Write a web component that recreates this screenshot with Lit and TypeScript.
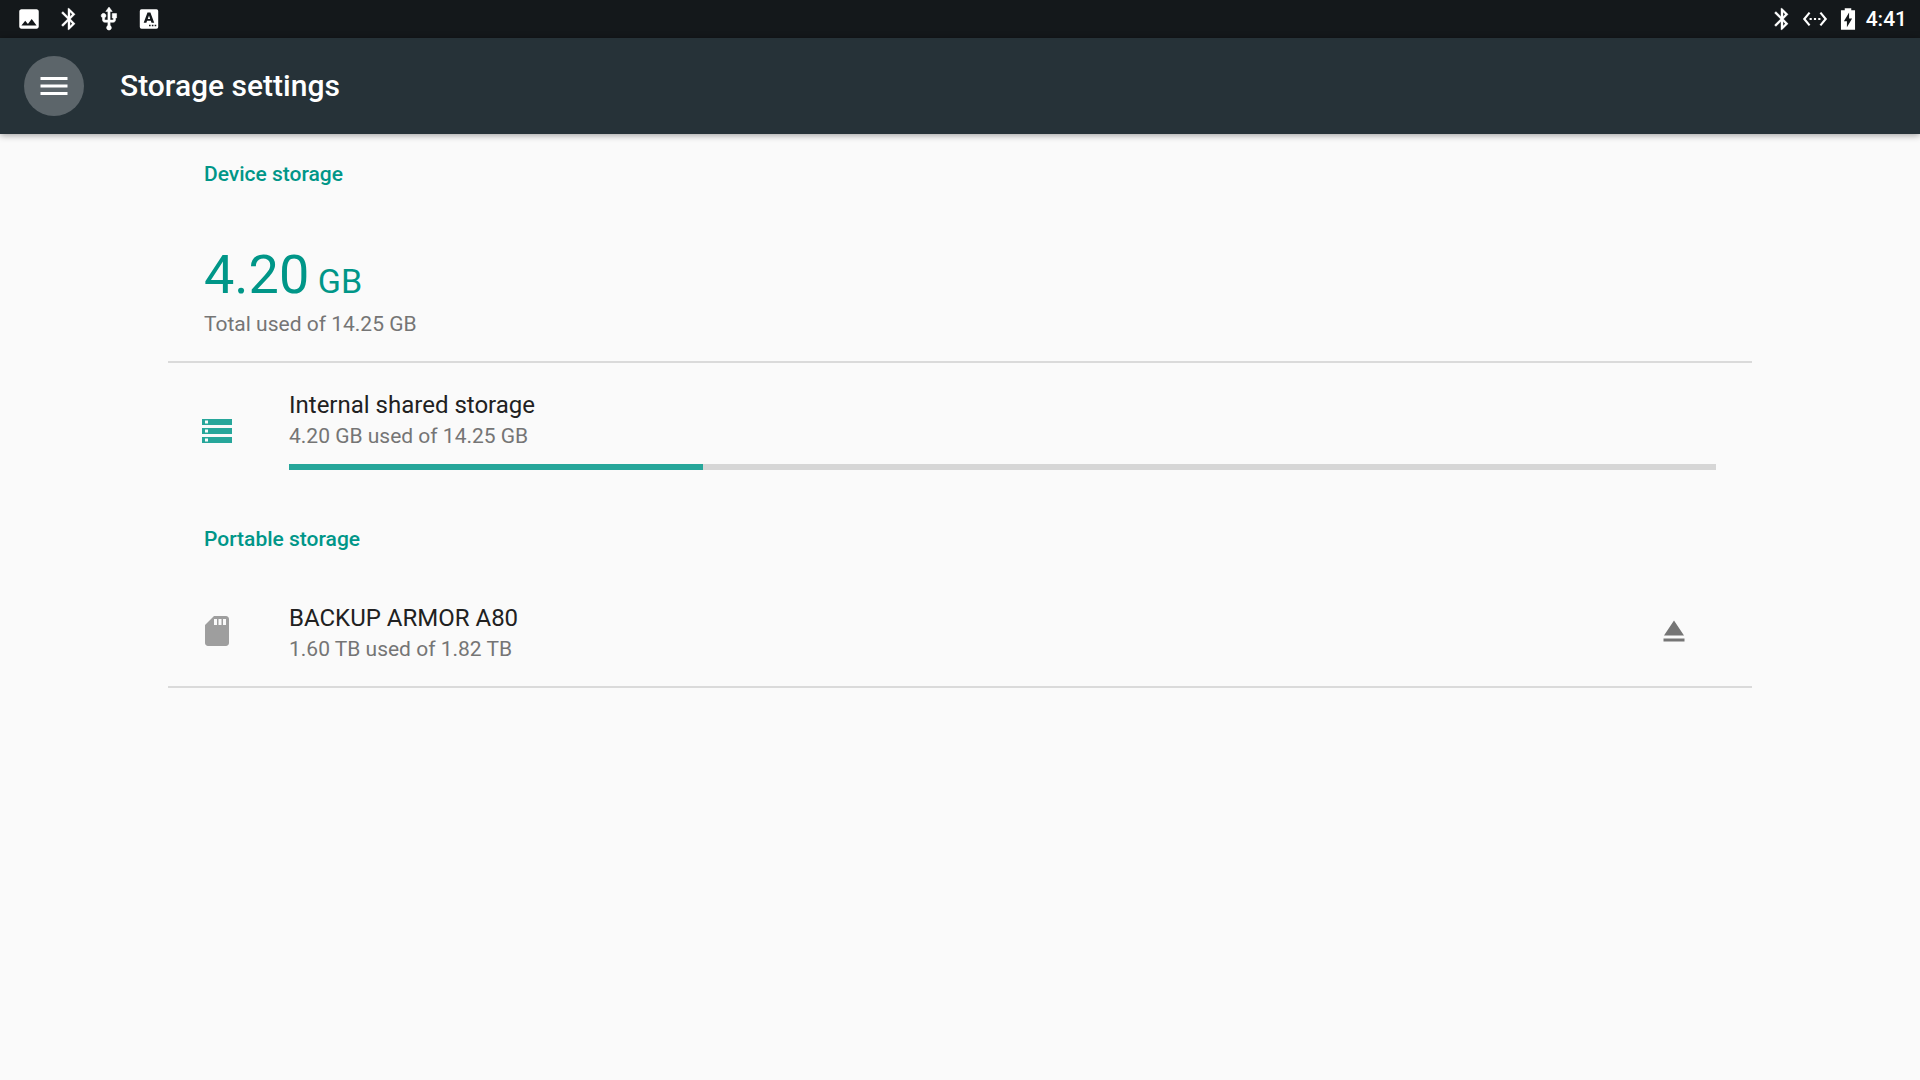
import { LitElement, html, css, svg } from "lit";
import { customElement, property } from "lit/decorators.js";

const icon = (cls: string, content: unknown) =>
  html`<svg class=${cls} viewBox="0 0 24 24" aria-hidden="true">${content}</svg>`;

const glyphs = {
  image: svg`<path fill-rule="evenodd" d="M21 19V5c0-1.100-.9-2-2-2H5c-1.100 0-2 .9-2 2v14c0 1.100.9 2 2 2h14c1.100 0 2-.9 2-2zM8.500 13.500l2.500 3.010L14.500 12l4.500 6H5l3.500-4.500z"/>`,
  bluetooth: svg`<path stroke="currentColor" stroke-width=".2" fill-rule="evenodd" d="M17.710 7.710L12 2h-1v7.590L6.410 5 5 6.410 10.590 12 5 17.590 6.410 19 11 14.410V22h1l5.710-5.710-4.300-4.290 4.300-4.290zM13 5.830l1.880 1.880L13 9.590V5.830zm1.880 10.460L13 18.170v-3.760l1.880 1.880z"/>`,
  usb: svg`<path stroke="currentColor" stroke-width=".5" d="M15 7v4h1v2h-3V5h2l-3-4-3 4h2v8H8v-2.070c.7-.37 1.200-1.080 1.200-1.930 0-1.210-.99-2.200-2.200-2.200-1.210 0-2.200.99-2.200 2.200 0 .85.5 1.560 1.200 1.930V13c0 1.110.89 2 2 2h3v3.050c-.71.37-1.200 1.100-1.200 1.950 0 1.220.99 2.200 2.200 2.200 1.210 0 2.200-.98 2.200-2.200 0-.85-.49-1.580-1.200-1.950V15h3c1.110 0 2-.89 2-2v-2h1V7h-4z"/>`,
  keyboard: svg`<rect x="3.500" y="3" width="17" height="18" rx="1.600"/>
    <path class="ink" fill-rule="evenodd" d="M10.600 6h2.700l3.500 9.500h-2.500l-.6-1.800h-3.500l-.6 1.800H7.100zM12 8.700l-1.150 3.300h2.250z"/>
    <path class="ink" d="M12 17.200h1.500v1.500H12zM14.600 17.200h1.500v1.500h-1.500zM17.200 17.200h1.500v1.500h-1.500z"/>`,
  ethernet: svg`<path d="M7.770 6.760L6.230 5.480.82 12l5.410 6.520 1.540-1.280L3.420 12l4.350-5.240zM7 13h2v-2H7v2zm10-2h-2v2h2v-2zm-6 2h2v-2h-2v2zm6.770-7.520l-1.540 1.280L20.580 12l-4.350 5.240 1.540 1.280L23.180 12l-5.410-6.520z"/>`,
  battery: svg`<path fill-rule="evenodd" d="M18.500 4H15V2H9v2H5.500v18h13zM11 19.500V14H8.200l4.800-8v5.500h2.800z"/>`,
  menu: svg`<path d="M3 18h18v-2H3v2zm0-5h18v-2H3v2zm0-7v2h18V6H3z"/>`,
  storage: svg`<path fill-rule="evenodd" d="M2 20h20v-4H2v4zm2-3h2v2H4v-2zM2 4v4h20V4H2zm4 3H4V5h2v2zm-4 7h20v-4H2v4zm2-3h2v2H4v-2z"/>`,
  sdCard: svg`<path fill-rule="evenodd" d="M18 2h-8L4.020 8 4 20c0 1.100.9 2 2 2h12c1.100 0 2-.9 2-2V4c0-1.100-.9-2-2-2zm-6 6h-2V4h2v4zm3 0h-2V4h2v4zm3 0h-2V4h2v4z"/>`,
  eject: svg`<path d="M5 17h14v2H5zm7-12L5.330 15h13.340z"/>`,
};

@customElement("status-bar")
class StatusBar extends LitElement {
  static styles = css`
    :host {
      display: flex;
      align-items: center;
      justify-content: space-between;
      height: 38px;
      padding: 0 13px 0 16px;
      background: #14181b;
      color: #fff;
    }
    .group { display: flex; align-items: center; gap: 14px; }
    .system { gap: 7px; }
    .icon { display: block; width: 26px; height: 26px; fill: currentColor; }
    .ink { fill: #14181b; }
    .clock { margin-left: -2px; font-size: 21px; line-height: 28px; font-weight: 500; }
  `;
  render() {
    return html`
      <div class="group">
        ${icon("icon", glyphs.image)} ${icon("icon", glyphs.bluetooth)}
        ${icon("icon", glyphs.usb)} ${icon("icon", glyphs.keyboard)}
      </div>
      <div class="group system">
        ${icon("icon", glyphs.bluetooth)} ${icon("icon", glyphs.ethernet)}
        ${icon("icon", glyphs.battery)}
        <time class="clock">4:41</time>
      </div>
    `;
  }
}

@customElement("storage-volume")
class StorageVolume extends LitElement {
  @property() name = "";
  @property() summary = "";
  @property() kind: "internal" | "portable" = "internal";
  @property({ type: Number }) percent = 0;

  static styles = css`
    :host { display: block; }
    .row { display: flex; align-items: center; padding: 0 36px 0 31px; }
    .icon { display: block; flex: none; width: 36px; height: 36px; fill: currentColor; }
    .internal { color: #26a69a; }
    .portable { color: #9e9e9e; }
    .text { flex: 1; min-width: 0; margin-left: 54px; padding: 27px 0 22px; }
    .metered { padding: 26px 0 29px; }
    .name { margin: 0; font-size: 24px; line-height: 32px; font-weight: 400; color: #212121; }
    .summary { margin: 0; font-size: 21px; line-height: 30px; color: #757575; }
    .track { height: 6px; margin-top: 13px; background: #d6d6d6; }
    .fill { height: 100%; background: #26a69a; }
    .eject {
      display: flex;
      align-items: center;
      justify-content: center;
      width: 84px;
      height: 60px;
      padding: 0;
      border: 0;
      background: none;
      color: #757575;
      cursor: pointer;
    }
  `;
  render() {
    const internal = this.kind === "internal";
    return html`
      <div class="row">
        ${icon(`icon ${this.kind}`, internal ? glyphs.storage : glyphs.sdCard)}
        <div class=${internal ? "text metered" : "text"}>
          <h3 class="name">${this.name}</h3>
          <p class="summary">${this.summary}</p>
          ${internal
            ? html`<div class="track" role="progressbar" aria-label=${this.name} aria-valuenow=${this.percent}>
                <div class="fill" style="width:${this.percent}%"></div>
              </div>`
            : null}
        </div>
        ${internal
          ? null
          : html`<button class="eject" type="button" aria-label="Eject">${icon("icon", glyphs.eject)}</button>`}
      </div>
    `;
  }
}

@customElement("app-root")
class AppRoot extends LitElement {
  static styles = css`
    :host {
      display: flex;
      flex-direction: column;
      min-height: 100vh;
      background: #fafafa;
      font-family: Roboto, "Noto Sans", sans-serif;
    }
    .toolbar {
      display: flex;
      align-items: center;
      gap: 36px;
      height: 96px;
      padding: 0 24px;
      background: #263238;
      color: #fff;
      box-shadow: 0 1px 7px rgba(0, 0, 0, 0.4);
    }
    .menu {
      display: flex;
      align-items: center;
      justify-content: center;
      width: 60px;
      height: 60px;
      padding: 0;
      border: 0;
      border-radius: 50%;
      background: #5c656a;
      color: #fff;
      cursor: pointer;
    }
    .icon { display: block; width: 36px; height: 36px; fill: currentColor; }
    .title { margin: 0; font-size: 30px; line-height: 36px; font-weight: 500; }
    .content { padding: 0 168px; }
    .section {
      margin: 0;
      padding: 26px 36px 22px;
      font-size: 21px;
      line-height: 28px;
      font-weight: 500;
      color: #009688;
    }
    .total { padding: 33px 36px 23px; border-bottom: 2px solid #dadada; }
    .amount { margin: 0; font-size: 54px; line-height: 64px; color: #009688; }
    .unit { font-size: 34px; line-height: 36px; }
    .caption { margin: 3px 0 0; font-size: 21px; line-height: 28px; color: #757575; }
    .last { border-bottom: 2px solid #dadada; }
  `;
  render() {
    return html`
      <status-bar></status-bar>
      <header class="toolbar">
        <button class="menu" type="button" aria-label="Menu">${icon("icon", glyphs.menu)}</button>
        <h1 class="title">Storage settings</h1>
      </header>
      <main class="content">
        <h2 class="section">Device storage</h2>
        <div class="total">
          <p class="amount">4.20<span class="unit"> GB</span></p>
          <p class="caption">Total used of 14.25 GB</p>
        </div>
        <storage-volume
          name="Internal shared storage"
          summary="4.20 GB used of 14.25 GB"
          percent="29"
        ></storage-volume>
        <h2 class="section">Portable storage</h2>
        <storage-volume
          class="last"
          kind="portable"
          name="BACKUP ARMOR A80"
          summary="1.60 TB used of 1.82 TB"
        ></storage-volume>
      </main>
    `;
  }
}
